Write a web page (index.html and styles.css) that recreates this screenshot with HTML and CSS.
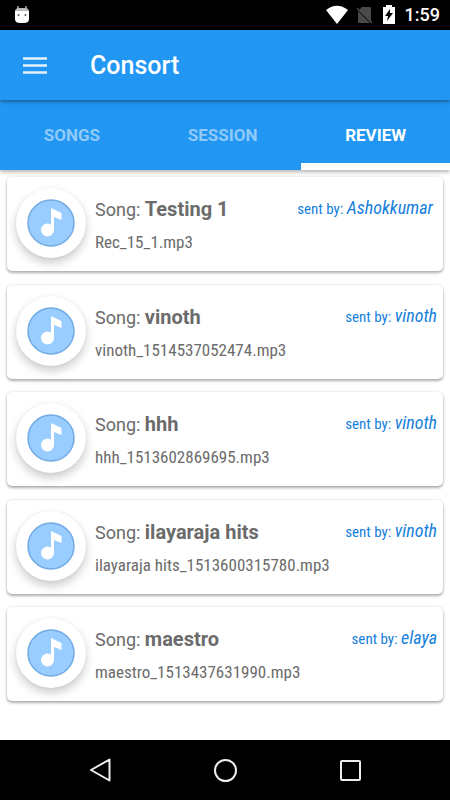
FILE: index.html
```html
<!DOCTYPE html>
<html lang="en">
<head>
    <meta charset="UTF-8">
    <meta name="viewport" content="width=device-width, initial-scale=1.0">
    <title>Consort</title>
    <link rel="stylesheet" href="styles.css">
</head>
<body>
    <!-- Icon shared by every song card -->
    <svg class="hidden" aria-hidden="true">
        <symbol id="note" viewBox="0 0 48 48">
            <circle cx="24" cy="24" r="23" fill="#99ccff" stroke="#72abe4" stroke-width="1.500"/>
            <circle cx="20.500" cy="31" r="6.500" fill="#fff"/>
            <path d="M24 9l10.500 5v7L27 18v13h-3z" fill="#fff"/>
        </symbol>
    </svg>

    <div class="status-bar">
        <svg width="16" height="20" viewBox="0 0 16 20">
            <path d="M4 1v4M12 1v4" stroke="#aaa" stroke-width="1.500"/>
            <path d="M1 7q0-4 4-4h6q4 0 4 4z" fill="#bbb"/>
            <path d="M1 6h14v8q0 4-5 4H6q-5 0-5-4z" fill="#fff"/>
            <circle cx="4.500" cy="10" r="1" fill="#555"/>
            <circle cx="11.500" cy="10" r="1" fill="#555"/>
        </svg>
        <div class="status-icons">
            <svg width="22" height="20" viewBox="0 0 22 20">
                <path d="M0 5Q11-3.500 22 5L11 19z" fill="#fff"/>
            </svg>
            <svg width="17" height="20" viewBox="0 0 17 20">
                <path d="M6 2h8q1 0 1 1v14L3 5zM2 6l12 12H3q-1 0-1-1z" fill="#4a4a4a"/>
                <path d="M1 3l15 15" stroke="#4a4a4a" stroke-width="1.500"/>
            </svg>
            <svg class="battery" width="12" height="20" viewBox="0 0 12 20">
                <path d="M3 0h6v2h3v17H0V2h3z" fill="#fff"/>
                <path d="M7 4L2 11h3l-1 5 6-8H7z" fill="#000"/>
            </svg>
            <span class="clock">1:59</span>
        </div>
    </div>

    <header class="toolbar">
        <button class="menu-button" type="button" aria-label="Open menu">
            <svg width="24" height="17" viewBox="0 0 24 17">
                <path d="M0 1.500h24M0 8.500h24M0 15.500h24" stroke="#e3f2fd" stroke-width="2.500"/>
            </svg>
        </button>
        <h1>Consort</h1>
    </header>

    <nav class="tabs">
        <a class="tab" href="#songs">SONGS</a>
        <a class="tab" href="#session">SESSION</a>
        <a class="tab active" href="#review" aria-current="page">REVIEW</a>
    </nav>

    <main class="song-list">
        <article class="card">
            <div class="avatar"><svg class="note"><use href="#note"/></svg></div>
            <div class="details">
                <div class="top-row">
                    <h2>Song: <b>Testing 1</b></h2>
                    <p class="sender">sent by: <em>Ashokkumar&nbsp;</em></p>
                </div>
                <p class="file-name">Rec_15_1.mp3</p>
            </div>
        </article>
        <article class="card">
            <div class="avatar"><svg class="note"><use href="#note"/></svg></div>
            <div class="details">
                <div class="top-row">
                    <h2>Song: <b>vinoth</b></h2>
                    <p class="sender">sent by: <em>vinoth</em></p>
                </div>
                <p class="file-name">vinoth_1514537052474.mp3</p>
            </div>
        </article>
        <article class="card">
            <div class="avatar"><svg class="note"><use href="#note"/></svg></div>
            <div class="details">
                <div class="top-row">
                    <h2>Song: <b>hhh</b></h2>
                    <p class="sender">sent by: <em>vinoth</em></p>
                </div>
                <p class="file-name">hhh_1513602869695.mp3</p>
            </div>
        </article>
        <article class="card">
            <div class="avatar"><svg class="note"><use href="#note"/></svg></div>
            <div class="details">
                <div class="top-row">
                    <h2>Song: <b>ilayaraja hits</b></h2>
                    <p class="sender">sent by: <em>vinoth</em></p>
                </div>
                <p class="file-name">ilayaraja hits_1513600315780.mp3</p>
            </div>
        </article>
        <article class="card">
            <div class="avatar"><svg class="note"><use href="#note"/></svg></div>
            <div class="details">
                <div class="top-row">
                    <h2>Song: <b>maestro</b></h2>
                    <p class="sender">sent by: <em>elaya</em></p>
                </div>
                <p class="file-name">maestro_1513437631990.mp3</p>
            </div>
        </article>
    </main>

    <div class="nav-bar">
        <button type="button" aria-label="Back">
            <svg width="24" height="24" viewBox="0 0 24 24">
                <path d="M21.500 1.500v21L3 12z"/>
            </svg>
        </button>
        <button type="button" aria-label="Home">
            <svg width="24" height="24" viewBox="0 0 24 24">
                <circle cx="12.500" cy="12.500" r="10.500"/>
            </svg>
        </button>
        <button type="button" aria-label="Recent apps">
            <svg width="24" height="24" viewBox="0 0 24 24">
                <rect x="3" y="3" width="19" height="19" rx="1"/>
            </svg>
        </button>
    </div>
</body>
</html>
```
FILE: styles.css
```css
* {
    box-sizing: border-box;
}
body {
    font-family: Roboto, sans-serif;
    margin: 0;
    min-height: 100vh;
    display: flex;
    flex-direction: column;
    background-color: #fff;
    color: #6b6b6b;
}
h1, h2, p {
    margin: 0;
}
button {
    padding: 0;
    border: none;
    background: none;
    cursor: pointer;
}
svg {
    display: block;
}
.hidden {
    display: none;
}

/* System status bar */
.status-bar {
    display: flex;
    justify-content: space-between;
    align-items: center;
    height: 30px;
    padding: 0 10px 0 14px;
    background-color: #000;
    color: #fff;
}
.status-icons {
    display: flex;
    align-items: center;
    gap: 8px;
}
.battery {
    margin: 0 2px;
}
.clock {
    font-size: 18px;
    font-weight: 500;
    line-height: 30px;
}

/* App header */
.toolbar {
    display: flex;
    align-items: center;
    gap: 43px;
    height: 70px;
    padding: 0 23px;
    background-color: #2196f3;
    box-shadow: 0 1px 4px rgba(0, 0, 0, 0.5);
    position: relative;
    z-index: 2;
}
.toolbar h1 {
    color: #fff;
    font-size: 25px;
    font-weight: 500;
}
.tabs {
    display: flex;
    height: 70px;
    background-color: #2196f3;
    box-shadow: 0 2px 4px rgba(0, 0, 0, 0.3);
    position: relative;
    z-index: 1;
}
.tab {
    flex: 1 1 auto;
    padding-top: 7px;
    border-bottom: 7px solid transparent;
    text-align: center;
    line-height: 57px;
    font-size: 17px;
    font-weight: bold;
    text-decoration: none;
    color: #90caf9;
}
.tab.active {
    color: #fff;
    border-bottom-color: #fff;
}

/* Song cards */
.song-list {
    flex: 1;
    display: flex;
    flex-direction: column;
    justify-content: space-between;
    gap: 13px;
    padding: 7px 7px 39px;
}
.card {
    display: flex;
    gap: 9px;
    height: 94px;
    padding: 11px 6px 0 9px;
    border-radius: 5px;
    background-color: #fff;
    box-shadow: 0 2px 3px rgba(0, 0, 0, 0.3), 0 0 3px rgba(0, 0, 0, 0.12);
}
.avatar {
    display: flex;
    flex-shrink: 0;
    align-items: center;
    justify-content: center;
    width: 70px;
    height: 70px;
    border-radius: 50%;
    background-color: #fff;
    box-shadow: 0 5px 10px rgba(0, 0, 0, 0.2), 0 0 3px rgba(0, 0, 0, 0.06);
}
.note {
    width: 48px;
    height: 48px;
}
.details {
    flex: 1;
    min-width: 0;
    padding-top: 7px;
}
.top-row {
    display: flex;
    justify-content: space-between;
}
.top-row h2 {
    font-size: 18px;
    font-weight: normal;
    line-height: 28px;
}
.top-row b {
    font-size: 20px;
}
.sender, .file-name {
    font-family: "Roboto Condensed", Roboto, sans-serif;
}
.sender {
    font-size: 15px;
    line-height: 26px;
    white-space: nowrap;
    color: #1580dc;
}
.sender em {
    font-size: 18px;
}
.file-name {
    padding-top: 6px;
    font-size: 17px;
    line-height: 24px;
}

/* System navigation buttons */
.nav-bar {
    display: flex;
    justify-content: center;
    gap: 101px;
    height: 60px;
    background-color: #000;
}
.nav-bar svg {
    fill: none;
    stroke: #eee;
    stroke-width: 2;
    stroke-linejoin: round;
}
```
